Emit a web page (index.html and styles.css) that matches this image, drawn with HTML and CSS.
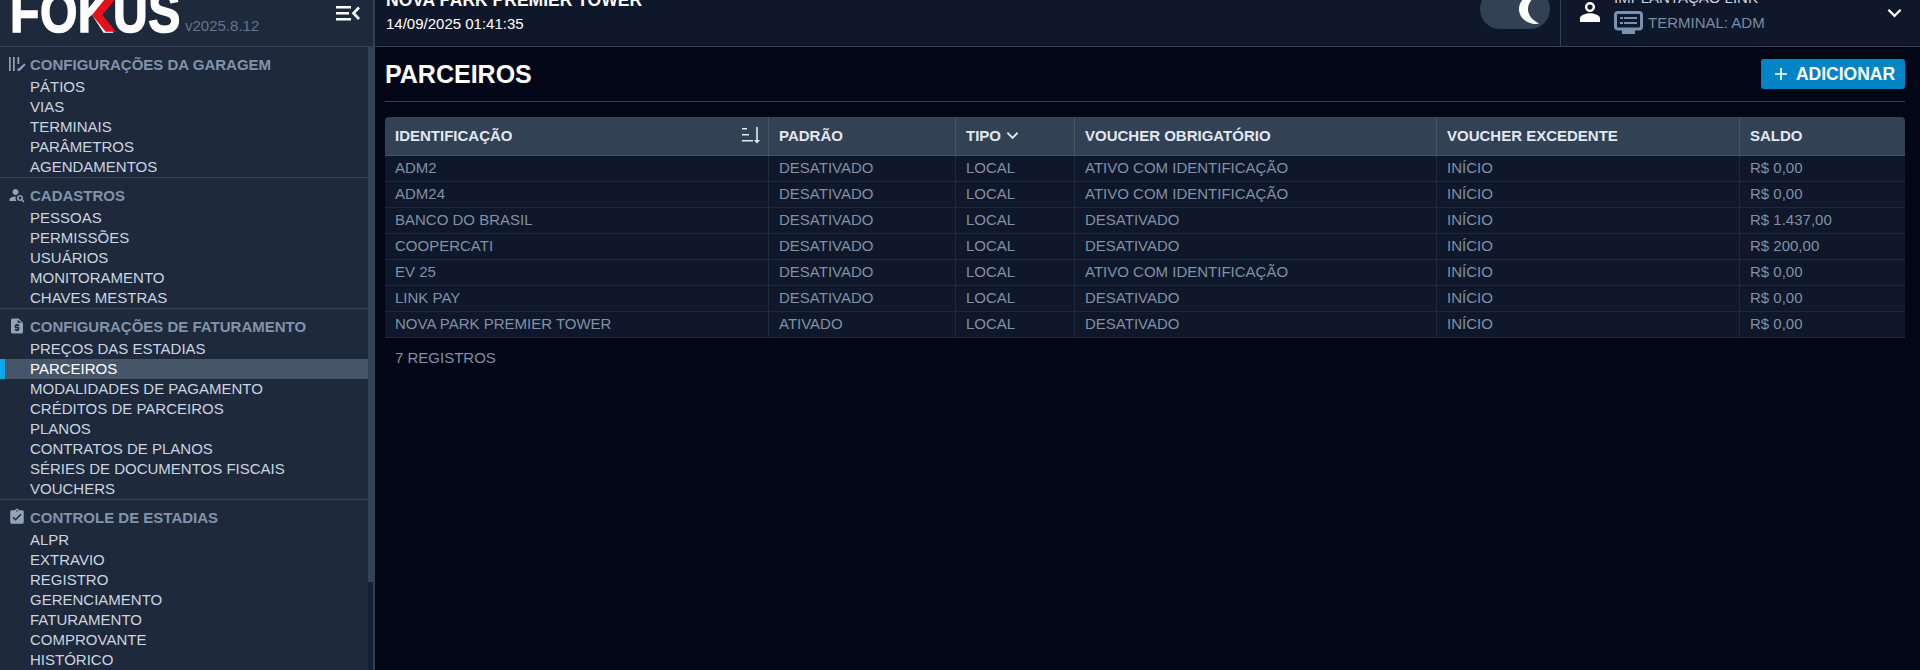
FILE: index.html
```html
<!DOCTYPE html>
<html lang="pt-BR">
<head>
<meta charset="utf-8">
<title>Parceiros</title>
<link rel="stylesheet" href="styles.css">
</head>
<body>
<div class="app">
  <header class="topbar">
    <div class="brand">
      <div class="logo"><span class="logo-text">FOKUS</span><svg class="logo-mark" viewBox="0 0 30 42"><polygon points="17,0 30,0 13,21 30,42 17,42 0,21" /></svg></div>
      <span class="version">v2025.8.12</span>
      <svg class="collapse" viewBox="0 0 24 18"><path d="M0 2h15v2.400H0zM0 8h13v2.400H0zM0 14h15v2.400H0z"/><path d="M23 3.500 17.500 9.200 23 15" fill="none" stroke-width="2.600"/></svg>
    </div>
    <div class="title-block">
      <div class="park">NOVA PARK PREMIER TOWER</div>
      <div class="clock">14/09/2025 01:41:35</div>
    </div>
    <div class="toggle">
      <svg class="moon" viewBox="0 0 24 32"><path d="M19 1C9 1 2 8 2 16s7 15 17 15c1.300 0 2.500-.2 3-.5C15 27 11 22 11 16S15 5 22 1.500C21.300 1.200 20 1 19 1z"/></svg>
    </div>
    <div class="userbox">
      <svg class="user-icon" viewBox="0 0 24 24"><path d="M12 5.900c1.160 0 2.100.94 2.100 2.100s-.94 2.100-2.100 2.100S9.900 9.160 9.900 8s.94-2.100 2.100-2.100zM12 4C9.790 4 8 5.790 8 8s1.790 4 4 4 4-1.790 4-4-1.790-4-4-4zm0 9c-2.670 0-8 1.340-8 4v3h16v-3c0-2.660-5.330-4-8-4z"/></svg>
      <div class="user-text">
        <div class="user-name">IMPLANTAÇÃO LINK</div>
        <div class="terminal">
          <svg class="terminal-icon" viewBox="0 0 29 23"><rect x="1.500" y="1.500" width="26" height="16.500" rx="2.500" fill="none" stroke-width="3"/><path d="M6 6h3v2H6zM10 6h13v2H10zM6 11h3v2H6zM10 11h13v2H10zM8 19h13v4H8z" stroke="none"/></svg>
          <span>TERMINAL: ADM</span>
        </div>
      </div>
      <svg class="user-chevron" viewBox="0 0 16 10"><path d="M1.500 1.500 8 8l6.500-6.500" fill="none" stroke-width="2.400"/></svg>
    </div>
  </header>
  <div class="body-row">
    <div class="side-wrap">
    <nav class="sidebar">
      <section class="group">
        <h3 class="group-title">
          <svg class="group-icon" viewBox="0 0 18 18"><path d="M1 2h1.700v14H1zM5 2h1.700v14H5zM9.500 2h1.700v7H9.500zM9.500 13.500h1.700V16H9.500z"/><path d="M16.300 8.500l1.300 1.300-5.500 5.700-2.300.6.600-2.300z"/></svg>
          CONFIGURAÇÕES DA GARAGEM
        </h3>
        <a class="item">PÁTIOS</a>
        <a class="item">VIAS</a>
        <a class="item">TERMINAIS</a>
        <a class="item">PARÂMETROS</a>
        <a class="item">AGENDAMENTOS</a>
      </section>
      <section class="group">
        <h3 class="group-title">
          <svg class="group-icon" viewBox="0 0 24 24"><path d="M10 12c2.210 0 4-1.790 4-4s-1.790-4-4-4-4 1.790-4 4 1.790 4 4 4z"/><path d="M10.350 14.010C7.620 13.910 2 15.270 2 18v2h9.540c-2.470-2.760-1.230-5.890-1.190-5.990z"/><path d="M19.430 18.020c.36-.59.57-1.280.57-2.020 0-2.210-1.790-4-4-4s-4 1.790-4 4 1.790 4 4 4c.74 0 1.430-.22 2.020-.57L20.590 22 22 20.590l-2.570-2.570zM16 18c-1.100 0-2-.9-2-2s.9-2 2-2 2 .9 2 2-.9 2-2 2z"/></svg>
          CADASTROS
        </h3>
        <a class="item">PESSOAS</a>
        <a class="item">PERMISSÕES</a>
        <a class="item">USUÁRIOS</a>
        <a class="item">MONITORAMENTO</a>
        <a class="item">CHAVES MESTRAS</a>
      </section>
      <section class="group">
        <h3 class="group-title">
          <svg class="group-icon" viewBox="0 0 24 24"><path d="M14 2H6c-1.100 0-1.990.9-1.990 2L4 20c0 1.100.89 2 1.990 2H18c1.100 0 2-.9 2-2V8l-6-6zm1 10h-4v1h3c.55 0 1 .45 1 1v3c0 .55-.45 1-1 1h-1v1h-2v-1H9v-2h4v-1h-3c-.55 0-1-.45-1-1v-3c0-.55.45-1 1-1h1V9h2v1h2v2zm-2-4V3.500L17.500 8H13z"/></svg>
          CONFIGURAÇÕES DE FATURAMENTO
        </h3>
        <a class="item">PREÇOS DAS ESTADIAS</a>
        <a class="item active">PARCEIROS</a>
        <a class="item">MODALIDADES DE PAGAMENTO</a>
        <a class="item">CRÉDITOS DE PARCEIROS</a>
        <a class="item">PLANOS</a>
        <a class="item">CONTRATOS DE PLANOS</a>
        <a class="item">SÉRIES DE DOCUMENTOS FISCAIS</a>
        <a class="item">VOUCHERS</a>
      </section>
      <section class="group last">
        <h3 class="group-title">
          <svg class="group-icon" viewBox="0 0 24 24"><path d="M19 3h-4.180C14.400 1.840 13.300 1 12 1s-2.400.84-2.820 2H5c-1.100 0-2 .9-2 2v14c0 1.100.9 2 2 2h14c1.100 0 2-.9 2-2V5c0-1.100-.9-2-2-2zm-7 0c.55 0 1 .45 1 1s-.45 1-1 1-1-.45-1-1 .45-1 1-1zm-2 14l-4-4 1.410-1.410L10 14.170l6.590-6.590L18 9l-8 8z"/></svg>
          CONTROLE DE ESTADIAS
        </h3>
        <a class="item">ALPR</a>
        <a class="item">EXTRAVIO</a>
        <a class="item">REGISTRO</a>
        <a class="item">GERENCIAMENTO</a>
        <a class="item">FATURAMENTO</a>
        <a class="item">COMPROVANTE</a>
        <a class="item">HISTÓRICO</a>
      </section>
    </nav>
    <div class="rail"><div class="thumb"></div></div>
    </div>
    <main class="main">
      <div class="page-head">
        <h1 class="page-title">PARCEIROS</h1>
        <button class="add-btn"><svg class="plus" viewBox="0 0 14 14"><path d="M6 0h2v6h6v2H8v6H6V8H0V6h6z"/></svg>ADICIONAR</button>
      </div>
      <table class="grid">
        <colgroup>
          <col class="c1"><col class="c2"><col class="c3"><col class="c4"><col class="c5"><col class="c6">
        </colgroup>
        <thead>
          <tr>
            <th><div class="th-sort">IDENTIFICAÇÃO<svg class="sort" viewBox="0 0 20 18"><path d="M1 2h5v1.500H1zM1 8h7v1.500H1zM1 14h11v1.500H1z"/><path d="M15.200 1h1.600v13h2.200L16 17.500 13 14h2.200z"/></svg></div></th>
            <th>PADRÃO</th>
            <th><span class="th-inline">TIPO<svg class="th-chevron" viewBox="0 0 14 9"><path d="M1.500 1.500 7 7l5.500-5.500" fill="none" stroke-width="2"/></svg></span></th>
            <th>VOUCHER OBRIGATÓRIO</th>
            <th>VOUCHER EXCEDENTE</th>
            <th>SALDO</th>
          </tr>
        </thead>
        <tbody>
          <tr><td>ADM2</td><td>DESATIVADO</td><td>LOCAL</td><td>ATIVO COM IDENTIFICAÇÃO</td><td>INÍCIO</td><td>R$ 0,00</td></tr>
          <tr><td>ADM24</td><td>DESATIVADO</td><td>LOCAL</td><td>ATIVO COM IDENTIFICAÇÃO</td><td>INÍCIO</td><td>R$ 0,00</td></tr>
          <tr><td>BANCO DO BRASIL</td><td>DESATIVADO</td><td>LOCAL</td><td>DESATIVADO</td><td>INÍCIO</td><td>R$ 1.437,00</td></tr>
          <tr><td>COOPERCATI</td><td>DESATIVADO</td><td>LOCAL</td><td>DESATIVADO</td><td>INÍCIO</td><td>R$ 200,00</td></tr>
          <tr><td>EV 25</td><td>DESATIVADO</td><td>LOCAL</td><td>ATIVO COM IDENTIFICAÇÃO</td><td>INÍCIO</td><td>R$ 0,00</td></tr>
          <tr><td>LINK PAY</td><td>DESATIVADO</td><td>LOCAL</td><td>DESATIVADO</td><td>INÍCIO</td><td>R$ 0,00</td></tr>
          <tr><td>NOVA PARK PREMIER TOWER</td><td>ATIVADO</td><td>LOCAL</td><td>DESATIVADO</td><td>INÍCIO</td><td>R$ 0,00</td></tr>
        </tbody>
      </table>
      <p class="count">7 REGISTROS</p>
    </main>
  </div>
</div>
</body>
</html>
```

FILE: styles.css
```css
* { box-sizing: border-box; }
html, body { margin: 0; height: 670px; overflow: hidden; background: #020617; }
body { font-family: "Liberation Sans", Arial, sans-serif; font-size: 15px; color: #cbd5e1; }

.app { margin-top: -20px; height: 690px; display: flex; flex-direction: column; }

.topbar { flex: 0 0 67px; display: flex; background: #0f172a; border-bottom: 1px solid #334155; }
.brand { position: relative; flex: 0 0 375px; display: flex; align-items: flex-end; padding: 0 0 13px 10px; background: #1e293b; border-right: 2px solid #334155; }
.logo { position: relative; flex: 0 0 175px; min-width: 0; height: 36px; white-space: nowrap; font-size: 58px; line-height: 30px; font-weight: 700; color: #fff; -webkit-text-stroke: 1.500px #fff; }
.logo-text { display: inline-block; letter-spacing: .6px; transform: scaleX(.83); transform-origin: left bottom; }
.logo-mark { position: absolute; left: 82px; bottom: 1px; width: 24px; height: 34px; fill: #e2111b; }
.version { margin: 0 0 -3px 0; color: #64748b; font-size: 15px; line-height: 20px; }
.collapse { position: absolute; left: 336px; top: 24px; width: 24px; height: 18px; fill: #fff; stroke: #fff; stroke-width: 0; }

.title-block { flex: 1; padding: 10px 0 0 11px; color: #fff; }
.park { font-weight: 700; font-size: 17.500px; line-height: 20px; }
.clock { margin-top: 4px; font-size: 15px; line-height: 20px; }

.toggle { flex: none; align-self: flex-start; width: 70px; height: 40px; margin: 9px 10px 0 0; border-radius: 20px; background: #334155; position: relative; }
.moon { position: absolute; left: 37px; top: 4px; width: 24px; height: 32px; fill: #fff; }

.userbox { flex: 0 0 360px; display: flex; border-left: 1px solid #334155; position: relative; padding-left: 14px; }
.user-icon { width: 30px; height: 30px; margin-top: 17px; fill: #fff; flex: none; }
.user-text { margin-left: 9px; padding-top: 8px; }
.user-name { font-size: 15px; line-height: 20px; color: #cbd5e1; }
.terminal { display: flex; align-items: center; margin-top: 3px; color: #7a8ca3; font-size: 15px; line-height: 20px; }
.terminal-icon { width: 29px; height: 23px; fill: #7a92b0; stroke: #7a92b0; margin-right: 5px; }
.user-chevron { position: absolute; right: 18px; top: 28px; width: 15px; height: 10px; stroke: #fff; }

.body-row { flex: 1; min-height: 0; display: flex; }
.side-wrap { flex: 0 0 375px; height: 623px; display: flex; background: #1e293b; border-right: 2px solid #334155; }
.sidebar { flex: 1; min-width: 0; overflow: hidden; }
.rail { flex: 0 0 5px; background: #152035; }
.thumb { height: 535px; background: #334155; }

.group { border-bottom: 1px solid #334155; }
.group.last { border-bottom: 0; }
.group-title { display: flex; align-items: center; height: 30px; margin: 0; padding: 4px 0 0 8px; font-size: 15px; font-weight: 700; color: #8293ab; }
.group-icon { width: 18px; height: 18px; margin-right: 4px; fill: #94a3b8; flex: none; }
.item { display: block; height: 20px; line-height: 20px; padding-left: 30px; color: #cbd5e1; }
.item.active { background: #475569; color: #fff; box-shadow: inset 5px 0 0 #0ea5e9; }

.main { flex: 1; min-width: 0; padding: 0 15px 0 10px; }
.page-head { display: flex; align-items: center; justify-content: space-between; height: 55px; border-bottom: 1px solid #334155; }
.page-title { margin: 0 0 1px; font-size: 25px; line-height: 30px; font-weight: 700; color: #fff; }
.add-btn { display: flex; align-items: center; justify-content: center; gap: 9px; width: 144px; height: 30px; padding: 0 0 0 4px; border: 0; border-radius: 3px; background: #0284c7; color: #fff; font: 700 17.500px "Liberation Sans", Arial, sans-serif; }
.plus { width: 12px; height: 12px; fill: #fff; }

.grid { width: 1520px; margin-top: 15px; border-collapse: separate; border-spacing: 0; table-layout: fixed; }
.c1 { width: 383px; } .c2 { width: 187px; } .c3 { width: 119px; } .c4 { width: 362px; } .c5 { width: 303px; } .c6 { width: 166px; }
th { height: 39px; padding: 0 9px 2px 10px; text-align: left; font-weight: 700; font-size: 15px; color: #e2e8f0; background: #334155; border-bottom: 1px solid #475569; border-left: 1px solid #475569; }
th:first-child { border-left: 0; border-top-left-radius: 4px; }
th:last-child { border-top-right-radius: 4px; }
.th-sort { display: flex; justify-content: space-between; align-items: center; }
.sort { width: 20px; height: 18px; fill: #e2e8f0; margin-right: -2px; }
.th-inline { display: inline-flex; align-items: center; gap: 5px; }
.th-chevron { width: 13px; height: 9px; stroke: #e2e8f0; }
td { height: 26px; padding: 0 9px 2px 10px; font-size: 15px; color: #8191a6; background: #0f172a; border-bottom: 1px solid #1e293b; border-left: 1px solid #1e293b; white-space: nowrap; }
td:first-child { border-left: 0; }
.count { margin: 10px 0 0 10px; line-height: 20px; font-size: 15px; color: #8191a6; }
```
